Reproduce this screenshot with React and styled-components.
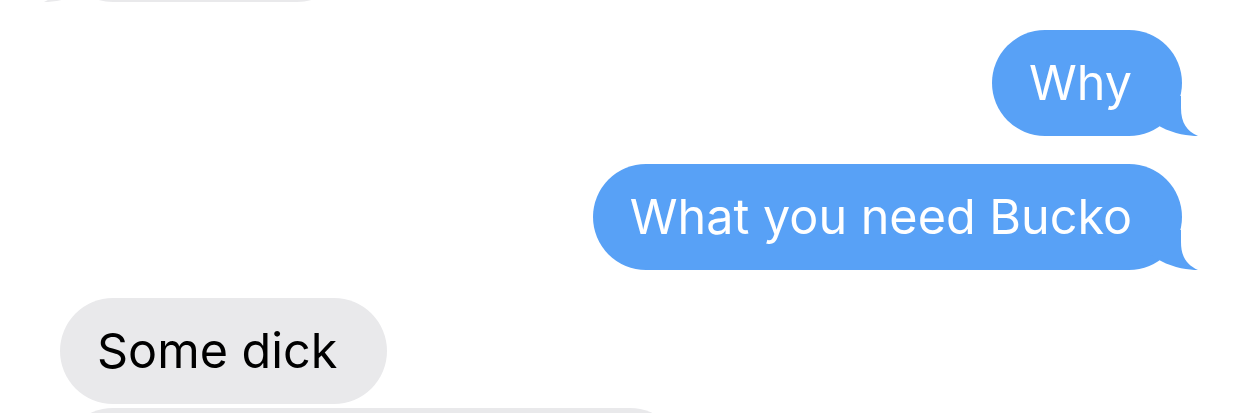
import React from "react";
import styled, { createGlobalStyle, css } from "styled-components";

const GlobalStyle = createGlobalStyle`
  html, body {
    margin: 0;
    padding: 0;
    background: #ffffff;
  }
  body {
    font-family: Inter, "Noto Sans", "Liberation Sans", sans-serif;
    -webkit-font-smoothing: antialiased;
    overflow: hidden;
  }
`;

const BLUE = "#58a1f6";
const GRAY = "#e9e9eb";

const Thread = styled.div`
  width: 1241px;
  height: 413px;
  overflow: hidden;
  display: flex;
  flex-direction: column;
  padding: 0 59px 0 60px;
  box-sizing: border-box;
`;

const Row = styled.div`
  display: flex;
  justify-content: ${(p) => (p.$from === "me" ? "flex-end" : "flex-start")};
  margin-top: ${(p) => p.$gap}px;
  flex-shrink: 0;
`;

const Bubble = styled.div`
  position: relative;
  box-sizing: border-box;
  height: 106px;
  padding: 0 50px 0 37px;
  border-radius: 53px;
  display: flex;
  align-items: center;
  font-size: 48.5px;
  line-height: 58px;
  white-space: nowrap;
  ${(p) =>
    p.$from === "me"
      ? css`
          background: ${BLUE};
          color: #ffffff;
        `
      : css`
          background: ${GRAY};
          color: #000000;
        `}
  ${(p) => p.$width && css`width: ${p.$width}px;`}
`;

const TailMark = styled.svg`
  position: absolute;
  bottom: 0;
  width: 50px;
  height: 40px;
  ${(p) =>
    p.$from === "me"
      ? css`
          right: -17px;
        `
      : css`
          left: -17px;
          transform: scaleX(-1);
        `}
`;

function Tail({ from }) {
  return (
    <TailMark $from={from} viewBox="0 0 50 40" aria-hidden="true">
      <path
        d="M32 0 L32 12 C32 27 38 35 49 40 C40 40 25 38 12 31 L0 24 L0 0 Z"
        fill={from === "me" ? BLUE : GRAY}
      />
    </TailMark>
  );
}

function Message({ from, tail, gap, width, children }) {
  return (
    <Row $from={from} $gap={gap}>
      <Bubble $from={from} $width={width}>
        {children}
        {tail && <Tail from={from} />}
      </Bubble>
    </Row>
  );
}

export default function App() {
  return (
    <>
      <GlobalStyle />
      <Thread>
        <Message from="them" tail gap={-104} width={290} />
        <Message from="me" tail gap={28}>
          Why
        </Message>
        <Message from="me" tail gap={28}>
          What you need Bucko
        </Message>
        <Message from="them" gap={28}>
          Some dick
        </Message>
        <Message from="them" gap={4} width={623} />
      </Thread>
    </>
  );
}
